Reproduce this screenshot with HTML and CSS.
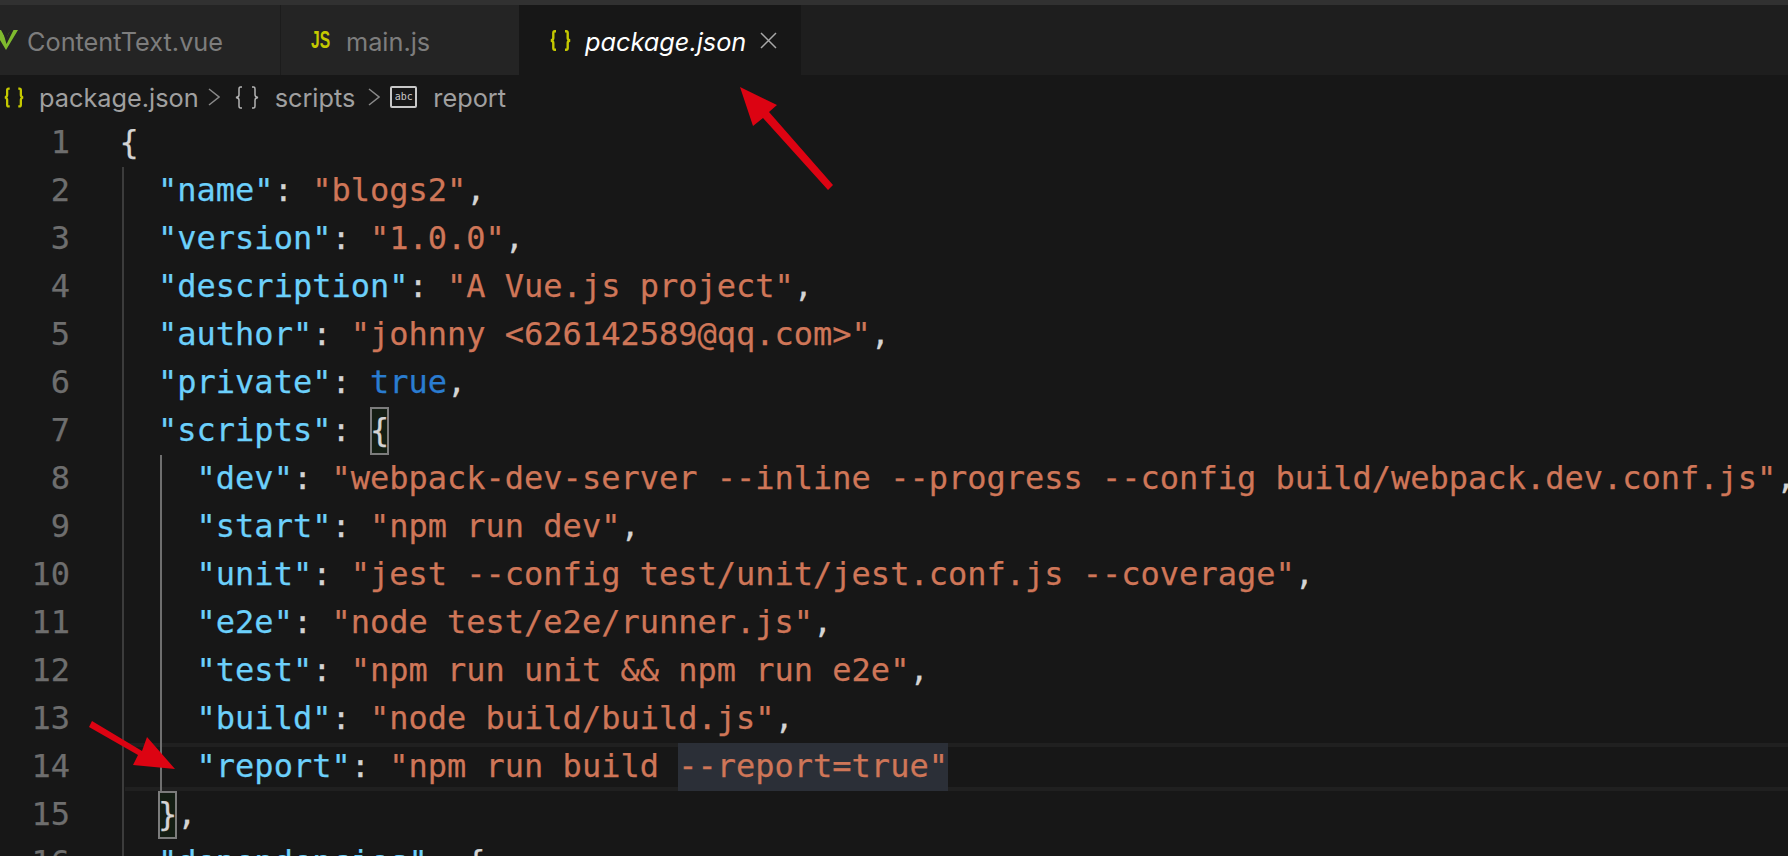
FILE: index.html
```html
<!DOCTYPE html>
<html lang="en">
<head>
<meta charset="utf-8">
<title>package.json</title>
<link rel="stylesheet" href="styles.css">
</head>
<body>
<div class="topbar"></div>
<div class="tabs">
  <div class="tab tab-first">
    <svg class="vue" width="18" height="20" viewBox="0 0 18 20"><path d="M-6 0H1L6 9 9 3 11.500 0H18L6 20Z" fill="#7fba2e"/><path d="M2.500 0H6.500L6.800 7 10.500 0H13.500L6.500 14Z" fill="#242424"/></svg>
    <span class="tab-label">ContentText.vue</span>
  </div>
  <div class="tab tab-second">
    <span class="js">JS</span>
    <span class="tab-label">main.js</span>
  </div>
  <div class="tab tab-active">
    <svg class="braces" width="21" height="21" viewBox="0 0 21 21" fill="none" stroke="#c5c900" stroke-width="2.400"><path d="M6 1.200H4.800Q3.300 1.200 3.300 3V8Q3.300 10 1 10.500 3.300 11 3.300 13V18Q3.300 19.800 4.800 19.800H6"/><path d="M15 1.200H16.200Q17.700 1.200 17.700 3V8Q17.700 10 20 10.500 17.700 11 17.700 13V18Q17.700 19.800 16.200 19.800H15"/></svg>
    <span class="tab-label tab-label-active">package.json</span>
    <svg class="close" width="17" height="17" viewBox="0 0 17 17" stroke="#a8a8a8" stroke-width="1.500"><path d="M1 1 16 16M16 1 1 16"/></svg>
  </div>
</div>
<div class="crumbs">
  <svg class="crumb-braces" width="20" height="21" viewBox="0 0 21 21" fill="none" stroke="#c5c900" stroke-width="2.400"><path d="M6 1.200H4.800Q3.300 1.200 3.300 3V8Q3.300 10 1 10.500 3.300 11 3.300 13V18Q3.300 19.800 4.800 19.800H6"/><path d="M15 1.200H16.200Q17.700 1.200 17.700 3V8Q17.700 10 20 10.500 17.700 11 17.700 13V18Q17.700 19.800 16.200 19.800H15"/></svg>
  <span class="crumb crumb-file">package.json</span>
  <svg class="chev chev-first" width="12" height="18" viewBox="0 0 12 18" fill="none" stroke="#8a8a8a" stroke-width="1.500"><path d="M1 1 11 9 1 17"/></svg>
  <svg class="crumb-obj" width="24" height="23" viewBox="0 0 24 23" fill="none" stroke="#b4b4b4" stroke-width="1.500"><path d="M7 1H5.500Q4 1 4 3V9Q4 11 1 11.500 4 12 4 14V20Q4 22 5.500 22H7"/><path d="M17 1H18.500Q20 1 20 3V9Q20 11 23 11.500 20 12 20 14V20Q20 22 18.500 22H17"/></svg>
  <span class="crumb crumb-scripts">scripts</span>
  <svg class="chev" width="12" height="18" viewBox="0 0 12 18" fill="none" stroke="#8a8a8a" stroke-width="1.500"><path d="M1 1 11 9 1 17"/></svg>
  <span class="abc">abc</span>
  <span class="crumb crumb-report">report</span>
</div>
<div class="editor">
  <div class="gutter">
    <div>1</div><div>2</div><div>3</div><div>4</div><div>5</div><div>6</div><div>7</div><div>8</div>
    <div>9</div><div>10</div><div>11</div><div>12</div><div>13</div><div>14</div><div>15</div><div>16</div>
  </div>
  <div class="code">
    <div class="line"><span class="p">{</span></div>
    <div class="line"><i class="g"></i><span class="k">"name"</span><span class="p">: </span><span class="s">"blogs2"</span><span class="p">,</span></div>
    <div class="line"><i class="g"></i><span class="k">"version"</span><span class="p">: </span><span class="s">"1.0.0"</span><span class="p">,</span></div>
    <div class="line"><i class="g"></i><span class="k">"description"</span><span class="p">: </span><span class="s">"A Vue.js project"</span><span class="p">,</span></div>
    <div class="line"><i class="g"></i><span class="k">"author"</span><span class="p">: </span><span class="s">"johnny &lt;626142589@qq.com&gt;"</span><span class="p">,</span></div>
    <div class="line"><i class="g"></i><span class="k">"private"</span><span class="p">: </span><span class="b">true</span><span class="p">,</span></div>
    <div class="line"><i class="g"></i><span class="k">"scripts"</span><span class="p">: </span><span class="p match">{</span></div>
    <div class="line"><i class="g"></i><i class="g g-active"></i><span class="k">"dev"</span><span class="p">: </span><span class="s">"webpack-dev-server --inline --progress --config build/webpack.dev.conf.js"</span><span class="p">,</span></div>
    <div class="line"><i class="g"></i><i class="g g-active"></i><span class="k">"start"</span><span class="p">: </span><span class="s">"npm run dev"</span><span class="p">,</span></div>
    <div class="line"><i class="g"></i><i class="g g-active"></i><span class="k">"unit"</span><span class="p">: </span><span class="s">"jest --config test/unit/jest.conf.js --coverage"</span><span class="p">,</span></div>
    <div class="line"><i class="g"></i><i class="g g-active"></i><span class="k">"e2e"</span><span class="p">: </span><span class="s">"node test/e2e/runner.js"</span><span class="p">,</span></div>
    <div class="line"><i class="g"></i><i class="g g-active"></i><span class="k">"test"</span><span class="p">: </span><span class="s">"npm run unit &amp;&amp; npm run e2e"</span><span class="p">,</span></div>
    <div class="line"><i class="g"></i><i class="g g-active"></i><span class="k">"build"</span><span class="p">: </span><span class="s">"node build/build.js"</span><span class="p">,</span></div>
    <div class="line line-current"><i class="g"></i><i class="g g-active"></i><span class="k">"report"</span><span class="p">: </span><span class="s">"npm run build </span><span class="s sel">--report=true"</span></div>
    <div class="line"><i class="g"></i><span class="p match">}</span><span class="p">,</span></div>
    <div class="line"><i class="g"></i><span class="k">"dependencies"</span><span class="p">: {</span></div>
  </div>
</div>
<svg class="arrows" width="1788" height="856" viewBox="0 0 1788 856" fill="#dc0312">
  <path d="M740 87 777 105 769 112 833 185 828 190 763 118 753 126Z"/>
  <path d="M92 721 142 751 147 737 175 769 133 765 138 755 89 727Z"/>
</svg>
</body>
</html>
```
FILE: styles.css
```css
* { box-sizing: border-box; }
html, body { margin: 0; padding: 0; height: 100%; }
body {
  width: 1788px;
  height: 856px;
  overflow: hidden;
  position: relative;
  background: #171717;
  display: flex;
  flex-direction: column;
}
.topbar { height: 5px; background: #313131; flex: none; }
.tabs {
  height: 70px;
  flex: none;
  display: flex;
  background: #1e1e1e;
  font-family: "Inter", "Liberation Sans", sans-serif;
  font-size: 25.300px;
}
.tab { display: flex; align-items: center; height: 70px; padding-bottom: 0; }
.tab-first { width: 281px; background: #242424; border-right: 1px solid #1c1c1c; }
.tab-second { width: 238px; background: #242424; padding-left: 30px; }
.tab-active { width: 282px; background: #171717; padding-left: 31px; }
.vue { flex: none; margin-right: 9px; }
.tab-label { color: #7d7d7d; padding-top: 2px; }
.tab-label-active { color: #ffffff; font-style: italic; margin-left: 14px; }
.js {
  color: #c5c900;
  font-weight: 700;
  font-size: 23px;
  width: 20px;
  margin-right: 15px;
  font-family: "Liberation Sans", sans-serif;
  transform: scaleX(0.68);
  transform-origin: left center;
}
.close { flex: none; margin-left: 14px; }
.crumbs {
  height: 44px;
  flex: none;
  display: flex;
  align-items: center;
  padding-left: 4px;
  color: #a0a0a0;
  font-family: "Inter", "Liberation Sans", sans-serif;
  font-size: 25.300px;
}
.crumb-braces { flex: none; }
.crumb-file { margin-left: 15px; }
.chev { flex: none; margin-left: 13px; }
.chev-first { margin-left: 9px; }
.crumb-obj { flex: none; margin-left: 15px; }
.crumb-scripts { margin-left: 16px; }
.abc {
  flex: none;
  width: 27px;
  height: 22px;
  margin-left: 10px;
  border: 2px solid #c8c8c8;
  border-radius: 2px;
  color: #c8c8c8;
  font-family: "DejaVu Sans Mono", monospace;
  font-size: 10px;
  line-height: 17px;
  text-align: center;
}
.crumb-report { margin-left: 16px; }
.editor {
  flex: 1;
  display: flex;
  overflow: hidden;
  font-family: "DejaVu Sans Mono", monospace;
  font-size: 32px;
  line-height: 46px;
  -webkit-text-stroke: 0.25px;
}
.gutter { width: 119.500px; flex: none; padding-right: 49.500px; text-align: right; color: #6e6e6e; }
.gutter div { height: 48px; }
.code { flex: 1; min-width: 0; }
.line { height: 48px; white-space: pre; display: flex; }
.line-current {
  margin-left: 5.500px;
  border-top: 4px solid #202020;
  border-bottom: 4px solid #202020;
  line-height: 38px;
}
.line-current .g { margin-top: -4px; }
.line-current .g:first-child { margin-left: -5.500px; }
.g {
  flex: none;
  display: block;
  width: 2ch;
  height: 48px;
  background: linear-gradient(#3c3c3c, #3c3c3c) no-repeat 2px 0 / 2px 100%;
}
.g-active { background-image: linear-gradient(#6f6f6f, #6f6f6f); }
.p { color: #d4d4d4; }
.k { color: #6cd0fb; }
.s { color: #cf7658; }
.b { color: #2a7cd0; }
.sel {
  background: #2b2f37;
  margin: -4px 0;
  padding: 4px 0;
  height: 48px;
}
.match {
  background: #141e14;
  outline: 2px solid #7c7c7c;
  outline-offset: -2px;
  height: 48px;
}
.arrows { position: absolute; left: 0; top: 0; pointer-events: none; }
```
